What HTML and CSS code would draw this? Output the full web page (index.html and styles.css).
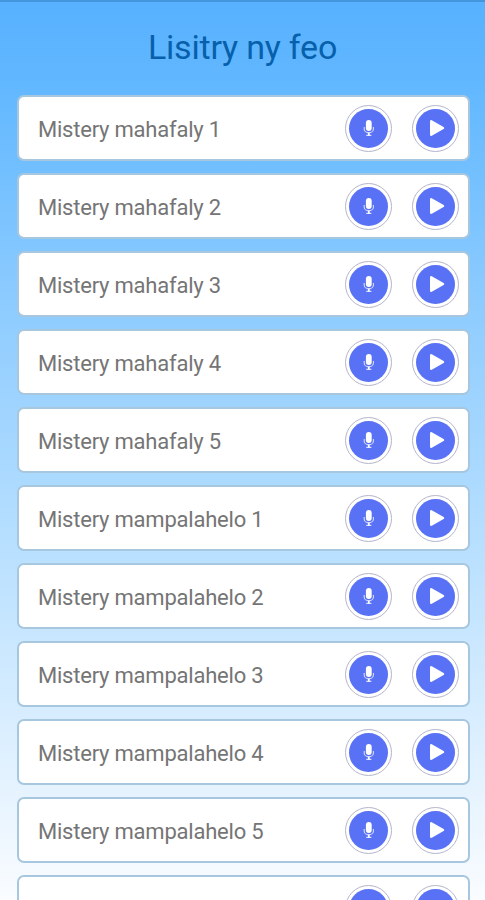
FILE: index.html
```html
<!DOCTYPE html>
<html lang="mg">
<head>
    <meta charset="utf-8">
    <title>Lisitry ny feo</title>
    <link rel="stylesheet" href="styles.css">
</head>
<body>
    <svg class="symbols">
        <symbol id="mic" viewBox="0 0 12 16">
            <rect x="2.9" y="0" width="5.8" height="11" rx="2.9" fill="#fff"/>
            <path d="M1.2 7v2a4.6 3.8 0 0 0 9.2 0V7M3.2 15.4h5.2" fill="none" stroke="#fff" stroke-opacity="0.75" stroke-width="1.1"/>
            <path d="M5.8 12.6v3" stroke="#fff" stroke-width="1.8"/>
        </symbol>
        <symbol id="play" viewBox="0 0 16 18">
            <path d="M2.2 2.2v13.6L14 9z" fill="#fff" stroke="#fff" stroke-width="2.4" stroke-linejoin="round"/>
        </symbol>
    </svg>
    <h1>Lisitry ny feo</h1>
    <div id="list" class="list"></div>

    <script>
        const names = ["mahafaly", "mampalahelo"];
        const buttons = `
            <button class="round" aria-label="Mic"><span class="disc"><svg class="mic"><use href="#mic"/></svg></span></button>
            <button class="round" aria-label="Play"><span class="disc"><svg class="play"><use href="#play"/></svg></span></button>`;
        let rows = "";

        for (const name of names) {
            for (let i = 1; i <= 5; i++) {
                rows += `<div class="card"><span class="name">Mistery ${name} ${i}</span>${buttons}</div>`;
            }
        }
        rows += `<div class="card"><span class="name"></span>${buttons}</div>`;

        document.getElementById("list").innerHTML = rows;
    </script>
</body>
</html>
```
FILE: styles.css
```css
* {
    box-sizing: border-box;
}

body {
    font-family: Roboto, sans-serif;
    height: 900px;
    margin: 0;
    overflow: hidden;
    border-top: 2px solid #4395dc;
    background: linear-gradient(#57b1ff, #64b9ff 11%, #8ccbff 33%, #b0dcff 56%, #d5ecff 78%, #fafcff);
}

.symbols {
    display: none;
}

h1 {
    margin: 0;
    height: 93px;
    padding-top: 24px;
    font-size: 34px;
    font-weight: 400;
    line-height: 42px;
    letter-spacing: -0.2px;
    text-align: center;
    color: #0760ab;
}

.list {
    display: flex;
    flex-direction: column;
    gap: 12px;
    padding: 0 15px 0 17px;
}

.card {
    display: flex;
    flex: none;
    align-items: center;
    gap: 20px;
    height: 66px;
    padding: 0 9px 0 19px;
    background-color: #fff;
    border: 2px solid #a7c7df;
    border-radius: 7px;
}

.name {
    flex: 1;
    padding-top: 2px;
    font-size: 22px;
    letter-spacing: -0.22px;
    color: #757575;
}

.round {
    display: flex;
    align-items: center;
    justify-content: center;
    width: 47px;
    height: 47px;
    padding: 0;
    background: #fff;
    border: 1px solid #b4b6ca;
    border-radius: 50%;
}

.disc {
    display: flex;
    align-items: center;
    justify-content: center;
    width: 39px;
    height: 39px;
    background-color: #5971f5;
    border-radius: 50%;
}

.mic {
    width: 12px;
    height: 16px;
}

.play {
    width: 16px;
    height: 18px;
    margin-left: 3px;
}
```
